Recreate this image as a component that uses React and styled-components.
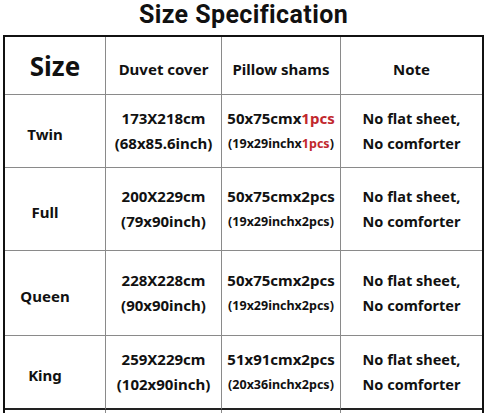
import styled, { createGlobalStyle } from 'styled-components';

const GlobalStyle = createGlobalStyle`
  html, body {
    margin: 0;
    padding: 0;
    background: #fff;
  }
  body {
    font-family: 'Noto Sans', 'DejaVu Sans', sans-serif;
    color: #111;
  }
`;

const rows = [
  {
    size: 'Twin',
    duvet: ['173X218cm', '(68x85.6inch)'],
    pillow: ['50x75cmx', '(19x29inchx'],
    count: '1pcs',
    red: true,
  },
  {
    size: 'Full',
    duvet: ['200X229cm', '(79x90inch)'],
    pillow: ['50x75cmx', '(19x29inchx'],
    count: '2pcs',
  },
  {
    size: 'Queen',
    duvet: ['228X228cm', '(90x90inch)'],
    pillow: ['50x75cmx', '(19x29inchx'],
    count: '2pcs',
  },
  {
    size: 'King',
    duvet: ['259X229cm', '(102x90inch)'],
    pillow: ['51x91cmx', '(20x36inchx'],
    count: '2pcs',
  },
];

export default function App() {
  return (
    <Page>
      <GlobalStyle />
      <Title>Size Specification</Title>
      <Table>
        <Cell>
          <BigHead>Size</BigHead>
        </Cell>
        <Cell>
          <Head>Duvet cover</Head>
        </Cell>
        <Cell>
          <Head>Pillow shams</Head>
        </Cell>
        <Cell $last>
          <Head>Note</Head>
        </Cell>

        {rows.map((r, i) => {
          const end = i === rows.length - 1;
          return [
            <Cell key={r.size + 'a'} $end={end}>
              <RowLabel>{r.size}</RowLabel>
            </Cell>,
            <Cell key={r.size + 'b'} $end={end}>
              <Line>{r.duvet[0]}</Line>
              <Line>{r.duvet[1]}</Line>
            </Cell>,
            <Cell key={r.size + 'c'} $end={end}>
              <Line>
                {r.pillow[0]}
                <Count $red={r.red}>{r.count}</Count>
              </Line>
              <Small>
                {r.pillow[1]}
                <Count $red={r.red}>{r.count}</Count>)
              </Small>
            </Cell>,
            <Cell key={r.size + 'd'} $end={end} $last>
              <Line $tight>No flat sheet,</Line>
              <Line $tight>No comforter</Line>
            </Cell>,
          ];
        })}

        <Cell />
        <Cell />
        <Cell />
        <Cell $last />
      </Table>
    </Page>
  );
}

const Page = styled.div`
  width: 487px;
  height: 413px;
  overflow: hidden;
`;

const Title = styled.h1`
  margin: 0;
  height: 35px;
  font-family: Roboto, 'Noto Sans', sans-serif;
  line-height: 30px;
  text-align: center;
  font-size: 25px;
  font-weight: bold;
  letter-spacing: 0.4px;
`;

const Table = styled.div`
  margin-left: 3px;
  width: 481px;
  box-sizing: border-box;
  border: 2px solid #111;
  border-bottom: none;
  display: grid;
  grid-template-columns: 101px 116px 119px 141px;
  grid-template-rows: 58px 73px 83px 85px 74px 40px;
`;

const Cell = styled.div`
  box-sizing: border-box;
  display: flex;
  flex-direction: column;
  align-items: center;
  justify-content: center;
  border-right: ${(p) => (p.$last ? 'none' : '1px solid #8a8a8a')};
  border-bottom: ${(p) => (p.$end ? '2px solid #222' : '1px solid #8a8a8a')};
  text-align: center;
`;

const BigHead = styled.div`
  font-size: 26px;
  font-weight: bold;
`;

const Head = styled.div`
  font-size: 15px;
  font-weight: bold;
  padding-top: 6px;
`;

const RowLabel = styled.div`
  font-size: 15px;
  font-weight: bold;
  padding-right: 20px;
  padding-top: 6px;
`;

const Line = styled.div`
  font-size: ${(p) => (p.$tight ? '14.5px' : '15px')};
  font-weight: bold;
  line-height: 25px;
  white-space: nowrap;
`;

const Small = styled.div`
  font-size: 12.5px;
  font-weight: bold;
  line-height: 25px;
  white-space: nowrap;
`;

const Count = styled.span`
  color: ${(p) => (p.$red ? '#c1272d' : 'inherit')};
`;
